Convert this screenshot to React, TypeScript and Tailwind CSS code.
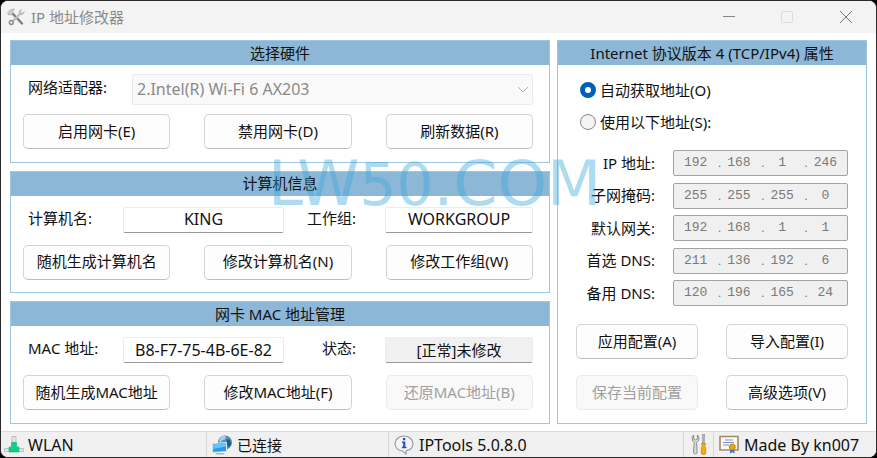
import { useId } from 'react';
import type { ReactNode } from 'react';
import clsx from 'clsx';

/* ---------- icons ---------- */

function ToolsIcon() {
    return (
        <svg viewBox="0 0 18 18" className="h-[18px] w-[18px]" fill="none" aria-hidden="true">
            <path d="M5.500 5.500 15 15.500" stroke="#7e7e7e" strokeWidth="2.4" strokeLinecap="round" />
            <path d="M.8 4.600 4 1.600 7.600 1l-2 2 .6 2-1.800 2-1.800-.6L1.400 7z" fill="#cfcfcf" stroke="#a2a2a2" strokeWidth=".7" />
            <path d="M13 6 5.500 13.500" stroke="#bcbcbc" strokeWidth="2.200" />
            <path d="M15.600 1.200 13.700 3.400l.8 1.300 1.500-.2 1.500-1.900c.5 2-.5 4-2.400 4.400-2.200.4-3.800-1.200-3.400-3.200.4-1.800 2-2.900 3.900-2.600z" fill="#bdbdbd" />
            <circle cx="4.300" cy="14.500" r="1.900" stroke="#8d8d8d" strokeWidth="1.500" />
        </svg>
    );
}

function NetworkPlugIcon() {
    return (
        <svg viewBox="0 0 20 17" className="h-[17px] w-5" aria-hidden="true">
            <path d="M8 .5h4v6H8z" fill="#dfe3e6" stroke="#b9bec2" />
            <path d="M.5 12.500h19v3H.5z" fill="#e2e5e7" stroke="#bcc1c4" />
            <path d="M7.500 6.500h5v4.500h2.500v5h-10v-5h2.500z" fill="#10cf85" stroke="#16b577" strokeWidth=".6" />
        </svg>
    );
}

function GlobeMonitorIcon() {
    return (
        <svg viewBox="0 0 20 20" className="h-5 w-5" aria-hidden="true">
            <circle cx="13" cy="7.500" r="7" fill="#4d92b8" />
            <path d="M8 3c2-2.500 5-2.500 6-1.500l-1 3-3 1-1 2-2-1z" fill="#a9cede" />
            <path d="m15 4 3 1 1.300 4-2.300 3-3-2z" fill="#245d87" />
            <path d="M.6 8.600 14.500 7.400v9.200L.6 17.400z" fill="#2699e8" stroke="#d5e5ee" />
            <path d="M1.200 9.200 14 8v3.500L1.200 14z" fill="#63c2ff" />
            <path d="M4.500 18h7l1 1.500h-9z" fill="#a7b5bd" />
        </svg>
    );
}

function InfoIcon() {
    return (
        <svg viewBox="0 0 20 20" className="h-5 w-5" aria-hidden="true">
            <path d="M10 1c5 0 9 3.300 9 7.500 0 3.700-2.900 6.500-6.800 7.200L12 19l-3.500-3C4 15.500 1 12.400 1 8.500 1 4.300 5 1 10 1z" fill="#f4f4f6" stroke="#9a9a9e" strokeWidth="1.200" />
            <path d="M8.900 3h2.400v2.300H8.900zM8 6.500h3.300v5.300h1.200v1.400H7.800v-1.400h1.300V7.900H8z" fill="#2a4fc4" />
        </svg>
    );
}

function RepairIcon() {
    return (
        <svg viewBox="0 0 16 21" className="h-[21px] w-4" aria-hidden="true">
            <path d="M2.600 1 1 3.500 1.800 7l1.400 1.500-.7 9.500c0 1.500.8 2 1.900 2s1.800-.7 1.700-2L5.600 8.500 7.600 6.500 8 3.500 6.400 1v4L4.500 6 2.700 5z" fill="#d9d9d9" stroke="#838383" strokeWidth=".9" />
            <path d="M11.500.5h2l-.3 3.500v6h-1.400V4z" fill="#cfcfcf" stroke="#777" strokeWidth=".7" />
            <path d="M10.500 9.500h4l-.8 3 1 1.200v5.300c0 1-1 1.500-2.200 1.500s-2.200-.5-2.200-1.500v-5.300l1-1.200z" fill="#f2ae0c" stroke="#b97d0c" strokeWidth=".7" />
        </svg>
    );
}

function CertificateIcon() {
    return (
        <svg viewBox="0 0 21 19" className="h-[19px] w-[21px]" aria-hidden="true">
            <path d="M1 1.500h18v13.500H1z" fill="#fbfaf3" stroke="#a08c64" strokeWidth="1.600" />
            <path d="M6 5h8M4 7.500h11M4 10h6" stroke="#7d91c9" />
            <path d="m11.500 13-.7 5.500 2.500-1.300 2.400 1.300-.7-5.500z" fill="#3678d6" />
            <circle cx="13.300" cy="12" r="3" fill="#e6a61a" stroke="#b97b0d" strokeWidth=".8" />
        </svg>
    );
}

/* ---------- building blocks ---------- */

function Panel({ title, children, className }: { title: string; children: ReactNode; className?: string }) {
    return (
        <section className={clsx('border border-[#9fc8e0] bg-white', className)}>
            <h2 className="flex h-6 items-center justify-center bg-[#8cb7d6] pb-px whitespace-nowrap">{title}</h2>
            {children}
        </section>
    );
}

function Button({ children, disabled }: { children: ReactNode; disabled?: boolean }) {
    return (
        <button
            type="button"
            disabled={disabled}
            className="h-[35px] rounded-[5px] border border-[#d4d4d4] border-b-[#bdbdbd] bg-[#fdfdfd] pb-[2px] whitespace-nowrap hover:bg-[#f2f8fd] disabled:border-[#ebebeb] disabled:bg-[#f9f9f9] disabled:text-[#a0a0a0]"
        >
            {children}
        </button>
    );
}

type TextFieldProps = { label: string; value: string; readOnly?: boolean; side: 'left' | 'right' };

function TextField({ label, value, readOnly, side }: TextFieldProps) {
    const id = useId();
    return (
        <>
            <label
                htmlFor={id}
                className={clsx('pb-1', side === 'left' ? 'w-[100px] pl-[5px]' : 'w-[101px] pr-[29px] text-right')}
            >
                {label}
            </label>
            <input
                id={id}
                defaultValue={value}
                readOnly={readOnly}
                className={clsx(
                    'h-[26px] min-w-0 rounded-xs border border-[#ececec] border-b-[#9a9a9a] pb-px text-center outline-none',
                    side === 'left' ? 'flex-1' : 'w-[148px]',
                    readOnly ? 'bg-[#f0f0f0]' : 'bg-white text-base',
                )}
            />
        </>
    );
}

function AddressField({ label, octets }: { label: string; octets: number[] }) {
    return (
        <div role="group" aria-label={label} className="flex items-center justify-end gap-[18px]">
            <span className="pb-px whitespace-nowrap">{label}</span>
            <div className="flex h-[26px] w-[175px] items-center rounded-xs border border-[#a3a3a3] bg-[#f0f0f0] px-1 font-['Liberation_Mono',monospace] text-[13px] text-[#7a7a7a]">
                {octets.map((octet, i) => (
                    <div key={i} className="contents">
                        {i > 0 && <span className="w-2 text-right font-['Liberation_Sans',sans-serif]">.</span>}
                        <input
                            disabled
                            aria-label={`${label} ${i + 1}`}
                            defaultValue={octet}
                            className="min-w-0 flex-1 text-center"
                        />
                    </div>
                ))}
            </div>
        </div>
    );
}

function Radio({ label, defaultChecked }: { label: string; defaultChecked?: boolean }) {
    return (
        <label className="flex h-6 items-center gap-1">
            <input
                type="radio"
                name="mode"
                defaultChecked={defaultChecked}
                className="h-4 w-4 appearance-none rounded-full border border-[#868686] bg-[#f3f3f3] checked:border-5 checked:border-[#0060b8] checked:bg-white"
            />
            {label}
        </label>
    );
}

const addresses = [
    { label: 'IP 地址:', octets: [192, 168, 1, 246] },
    { label: '子网掩码:', octets: [255, 255, 255, 0] },
    { label: '默认网关:', octets: [192, 168, 1, 1] },
    { label: '首选 DNS:', octets: [211, 136, 192, 6] },
    { label: '备用 DNS:', octets: [120, 196, 165, 24] },
];

const panelBody = 'flex flex-col gap-[9px] pt-2 pr-4 pl-3';
const buttonRow = 'grid grid-cols-3 gap-x-[34px]';

export default function App() {
    return (
        <div className="min-h-screen bg-black font-['Noto_Sans','Noto_Sans_CJK_SC',sans-serif] text-[15px] leading-5 text-[#111]">
            <div className="relative overflow-hidden rounded-lg border border-[#2d2a2e] bg-white">
                {/* Title bar */}
                <header className="flex h-8 items-center bg-[#f3f3f3] pl-[6px] text-[#8a8a8a]">
                    <ToolsIcon />
                    <h1 className="flex-1 pb-px pl-[6px]">IP 地址修改器</h1>
                    <button type="button" aria-label="最小化" className="flex h-8 w-[58px] items-center justify-center">
                        <svg viewBox="0 0 12 12" className="h-3 w-3" stroke="#858585">
                            <path d="M0 5.500h12" />
                        </svg>
                    </button>
                    <button type="button" disabled aria-label="最大化" className="flex h-8 w-[58px] items-center justify-center">
                        <svg viewBox="0 0 12 12" className="h-3 w-3" stroke="#dcdcdc" fill="none">
                            <rect x=".5" y=".5" width="11" height="11" rx="1" />
                        </svg>
                    </button>
                    <button type="button" aria-label="关闭" className="flex h-8 w-[60px] items-center justify-center">
                        <svg viewBox="0 0 12 12" className="h-3 w-3" stroke="#777">
                            <path d="m0 0 12 12M12 0 0 12" />
                        </svg>
                    </button>
                </header>

                <main className="flex gap-[7px] px-[9px] py-[7px]">
                    <div className="grid min-w-0 flex-1 auto-rows-fr grid-cols-1 gap-2">
                        <Panel title="选择硬件">
                            <div className={panelBody}>
                                <div className="flex h-8 items-center">
                                    <label htmlFor="adapter" className="w-[109px] pb-1 pl-[5px]">
                                        网络适配器:
                                    </label>
                                    <div className="relative flex-1">
                                        <select
                                            id="adapter"
                                            disabled
                                            className="block h-[31px] w-full appearance-none rounded-xs border border-[#ebebeb] bg-[#f9f9f9] px-1 text-base text-[#8a8a8a] opacity-100"
                                        >
                                            <option>2.Intel(R) Wi-Fi 6 AX203</option>
                                        </select>
                                        <svg viewBox="0 0 12 7" className="pointer-events-none absolute top-3 right-1 h-[7px] w-3" fill="none" stroke="#b5b5b5">
                                            <path d="m1 1 5 5 5-5" />
                                        </svg>
                                    </div>
                                </div>
                                <div className={buttonRow}>
                                    <Button>启用网卡(E)</Button>
                                    <Button>禁用网卡(D)</Button>
                                    <Button>刷新数据(R)</Button>
                                </div>
                            </div>
                        </Panel>

                        <Panel title="计算机信息">
                            <div className={panelBody}>
                                <div className="flex h-8 items-center">
                                    <TextField side="left" label="计算机名:" value="KING" />
                                    <TextField side="right" label="工作组:" value="WORKGROUP" />
                                </div>
                                <div className={buttonRow}>
                                    <Button>随机生成计算机名</Button>
                                    <Button>修改计算机名(N)</Button>
                                    <Button>修改工作组(W)</Button>
                                </div>
                            </div>
                        </Panel>

                        <Panel title="网卡 MAC 地址管理">
                            <div className={panelBody}>
                                <div className="flex h-8 items-center">
                                    <TextField side="left" label="MAC 地址:" value="B8-F7-75-4B-6E-82" />
                                    <TextField side="right" label="状态:" value="[正常]未修改" readOnly />
                                </div>
                                <div className={buttonRow}>
                                    <Button>随机生成MAC地址</Button>
                                    <Button>修改MAC地址(F)</Button>
                                    <Button disabled>还原MAC地址(B)</Button>
                                </div>
                            </div>
                        </Panel>
                    </div>

                    <Panel title="Internet 协议版本 4 (TCP/IPv4) 属性" className="w-[310px] shrink-0">
                        <div className="px-[18px] pt-[13px] pb-[13px]">
                            <div className="flex flex-col gap-2 pl-1">
                                <Radio label="自动获取地址(O)" defaultChecked />
                                <Radio label="使用以下地址(S):" />
                            </div>
                            <div className="mt-4 flex h-[156px] flex-col justify-between">
                                {addresses.map((a) => (
                                    <AddressField key={a.label} {...a} />
                                ))}
                            </div>
                            <div className="mt-[18px] grid grid-cols-2 gap-x-7 gap-y-4">
                                <Button>应用配置(A)</Button>
                                <Button>导入配置(I)</Button>
                                <Button disabled>保存当前配置</Button>
                                <Button>高级选项(V)</Button>
                            </div>
                        </div>
                    </Panel>
                </main>

                {/* Status bar */}
                <footer className="flex h-[26px] items-center divide-x divide-[#d7d7d7] border-t border-[#dcdcdc] bg-[#f0f0f0]">
                    <div className="flex h-full w-[206px] items-center gap-1 pl-[3px] text-base">
                        <NetworkPlugIcon />
                        WLAN
                    </div>
                    <div className="flex h-full w-[182px] items-center gap-[5px] pl-[5px]">
                        <GlobeMonitorIcon />
                        已连接
                    </div>
                    <div className="flex h-full flex-1 items-center gap-[5px] pl-[5px] text-base">
                        <InfoIcon />
                        IPTools 5.0.8.0
                    </div>
                    <div className="flex h-full w-[30px] items-center justify-center">
                        <RepairIcon />
                    </div>
                    <div className="flex h-full w-[162px] items-center gap-1 pl-[5px] text-base">
                        <CertificateIcon />
                        Made By kn007
                    </div>
                </footer>

                {/* Watermark */}
                <p className="pointer-events-none absolute top-[150px] left-[267px] font-['DejaVu_Sans',sans-serif] text-[63px] leading-[66px] font-normal whitespace-nowrap text-[#36a5dc]/40">
                    LW<span className="text-[58px]">50</span>.COM
                </p>
            </div>
        </div>
    );
}
